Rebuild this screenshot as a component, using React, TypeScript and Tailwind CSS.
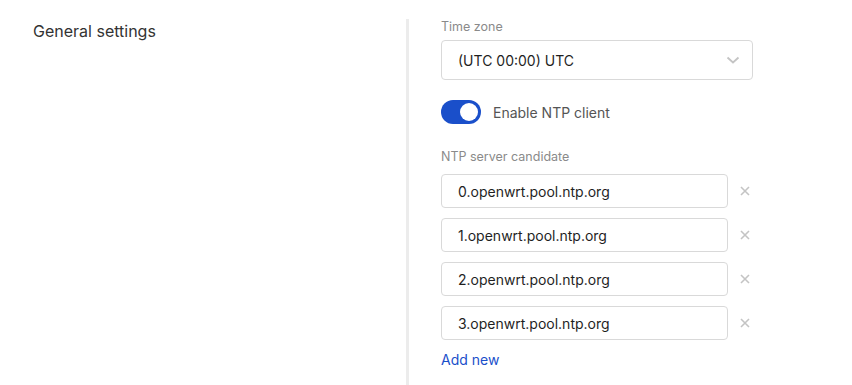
import { useState } from 'react';

const servers = [
  '0.openwrt.pool.ntp.org',
  '1.openwrt.pool.ntp.org',
  '2.openwrt.pool.ntp.org',
  '3.openwrt.pool.ntp.org',
];

export default function App() {
  const [ntp, setNtp] = useState(true);

  return (
    <div className="w-[852px] h-[385px] bg-white flex font-['Inter',sans-serif] overflow-hidden">
      <div className="w-[406px] pl-[33px] pt-[21px]">
        <h2 className="text-[16px] text-[#333] leading-5">General settings</h2>
      </div>

      <div className="mt-[19px] border-l-[3px] border-[#ececec] pl-[32px] flex-1">
        <label className="block text-[12.5px] text-[#8a8a8a] leading-4">Time zone</label>
        <div className="mt-[5px] w-[312px] h-[40px] border border-[#d9d9d9] rounded-[4px] flex items-center justify-between pl-[16px] pr-[12px]">
          <span className="text-[14px] text-[#1f1f1f]">(UTC 00:00) UTC</span>
          <svg width="14" height="14" viewBox="0 0 14 14" fill="none" className="text-[#c4c4c4]">
            <path d="M1.5 4.5 L7 9.5 L12.5 4.5" stroke="currentColor" strokeWidth="1.8" />
          </svg>
        </div>

        <div className="mt-[20px] flex items-center gap-[12px]">
          <button
            onClick={() => setNtp(!ntp)}
            className={`w-[40px] h-[24px] rounded-full flex items-center px-[3px] ${ntp ? 'bg-[#1a4fca] justify-end' : 'bg-[#ccc] justify-start'}`}
          >
            <span className="w-[18px] h-[18px] rounded-full bg-white block" />
          </button>
          <span className="text-[14px] text-[#555]">Enable NTP client</span>
        </div>

        <label className="block mt-[25px] text-[12.5px] text-[#8a8a8a] leading-4">NTP server candidate</label>
        <div className="mt-[9px] flex flex-col gap-[10px]">
          {servers.map((s) => (
            <div key={s} className="flex items-center">
              <div className="w-[287px] h-[34px] border border-[#d9d9d9] rounded-[4px] flex items-center pl-[16px]">
                <span className="text-[14px] text-[#1f1f1f]">{s}</span>
              </div>
              <svg width="10" height="10" viewBox="0 0 10 10" className="ml-[12px] text-[#c4c4c4]">
                <path d="M1 1 L9 9 M9 1 L1 9" stroke="currentColor" strokeWidth="1.6" />
              </svg>
            </div>
          ))}
        </div>

        <a href="#" className="block mt-[9px] text-[14px] text-[#1a4fca]">Add new</a>
      </div>
    </div>
  );
}
